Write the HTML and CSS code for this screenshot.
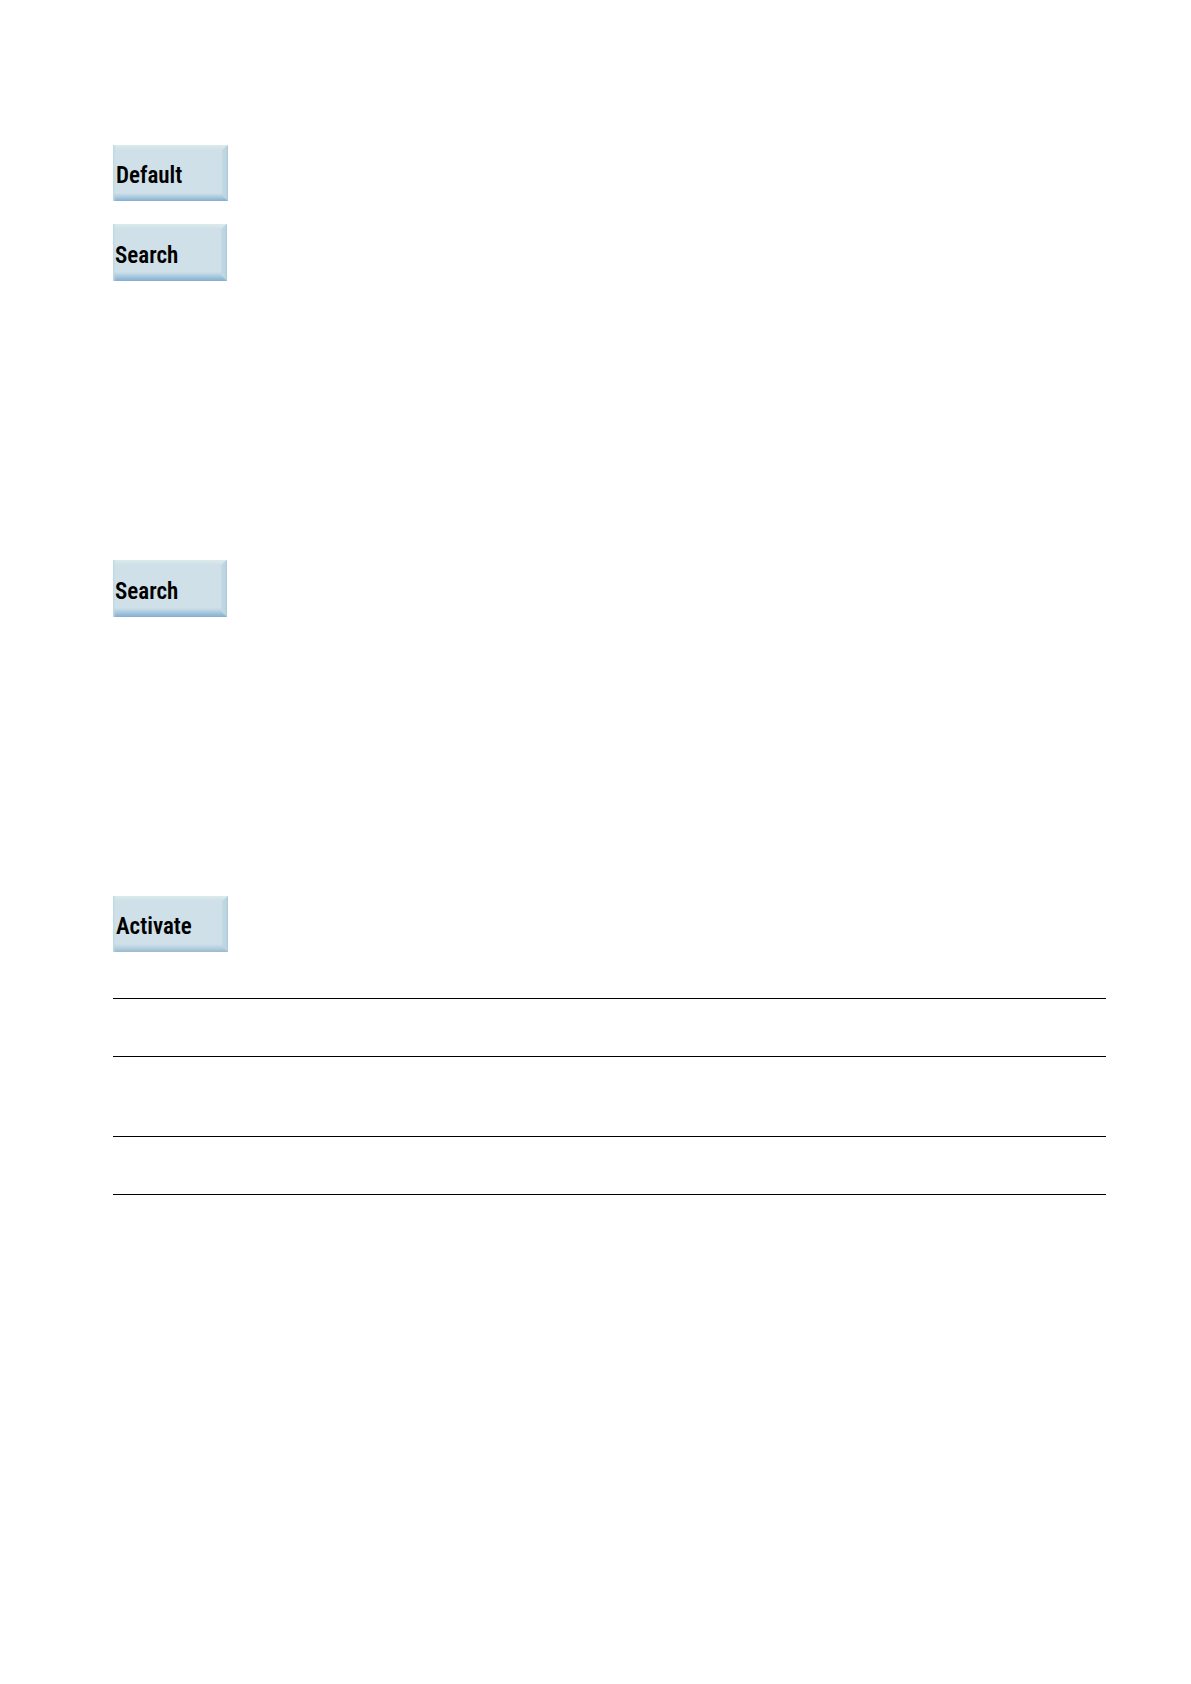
FILE: index.html
```
<!DOCTYPE html>
<html lang="en">
<head>
    <meta charset="UTF-8">
    <meta name="viewport" content="width=device-width, initial-scale=1.0">
    <title>Softkeys</title>
    <link rel="stylesheet" href="styles.css">
</head>
<body>
    <main class="page">
        <section class="step">
            <button type="button" class="softkey wide">Default</button>
        </section>
        <section class="step tall">
            <button type="button" class="softkey">Search</button>
        </section>
        <section class="step tall">
            <button type="button" class="softkey">Search</button>
        </section>
        <section class="step">
            <button type="button" class="softkey wide active">Activate</button>
        </section>
        <div class="rows">
            <div class="row"></div>
            <div class="row large"></div>
            <div class="row"></div>
        </div>
    </main>
</body>
</html>
```

FILE: styles.css
```
body {
    margin: 0;
    background: #fff;
    font-family: "Roboto Condensed", "Liberation Sans Narrow", Roboto, sans-serif;
}
.page {
    padding: 145px 85px 80px 113px;
}
.step {
    min-height: 79px;
}
.step.tall {
    min-height: 336px;
}
.softkey {
    position: relative;
    display: block;
    width: 114px;
    height: 57px;
    padding: 6px 0 0 2px;
    border: none;
    background: linear-gradient(to right, #bfd9e2, rgba(191, 217, 226, 0) 3px),
        linear-gradient(#dceaec, #cfe0e8 5px, #cfe0e8 48px, #abcbe0 52px, #82aed0);
    color: #000;
    font-family: inherit;
    font-size: 23px;
    font-weight: 600;
    line-height: 26px;
    text-align: left;
    cursor: pointer;
}
/* bevel on the right edge */
.softkey::after {
    content: "";
    position: absolute;
    top: 0;
    right: 0;
    bottom: 0;
    width: 6px;
    background: linear-gradient(to right, #c3d9e3, #b9d3df 5px, #9fc3d6);
    clip-path: polygon(100% 0, 100% 100%, 0 calc(100% - 6px), 0 5px);
}
.softkey.wide {
    width: 115px;
    height: 56px;
    padding-left: 3px;
}
.softkey.active {
    background: linear-gradient(to right, #bfd9e2, rgba(191, 217, 226, 0) 3px),
        linear-gradient(#dceaec, #cfe0e8 5px, #cfe0e8 48px, #b6cfdf 52px, #98b9d0);
}
.rows {
    margin-top: 23px;
    border-bottom: 1px solid #000;
}
.row {
    height: 57px;
    border-top: 1px solid #000;
}
.row.large {
    height: 79px;
}
```
